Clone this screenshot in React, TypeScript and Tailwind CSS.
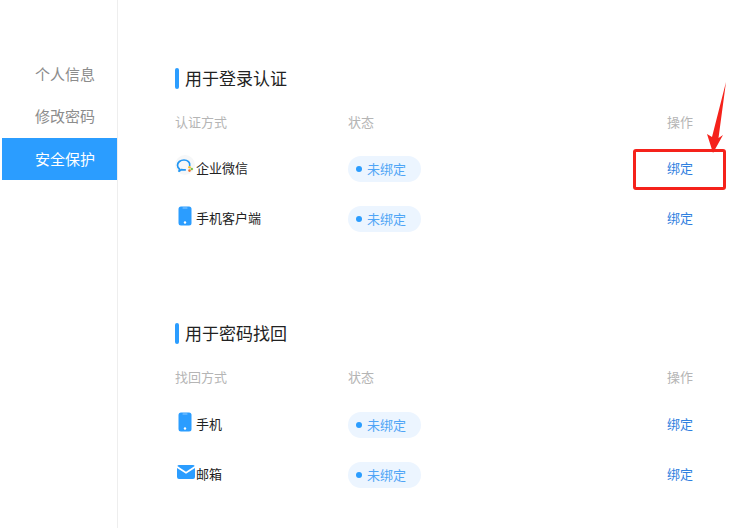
const font = { fontFamily: '"Noto Sans CJK SC", "Liberation Sans", sans-serif' };

function WeComIcon() {
  return (
    <svg width="20" height="20" viewBox="0 0 20 20" className="shrink-0 mb-[6px]">
      <circle cx="10" cy="10" r="10" fill="#f6f7f8" />
      <path d="M14.700 10.500C15.400 7.500 12.600 5 9 5 5.400 5 2.500 7.300 2.500 10.200c0 1.500.8 2.800 2 3.700l-.5 2.300 2.700-1.600c1.100.3 2.300.4 3.500.2" fill="none" stroke="#2196f3" strokeWidth="1.700" strokeLinecap="round" strokeLinejoin="round" />
      <circle cx="14.500" cy="12.300" r="1.300" fill="#f5c02c" />
      <circle cx="16.800" cy="14" r="1.200" fill="#7cc242" />
      <circle cx="14.500" cy="15.600" r="1.300" fill="#f0702e" />
    </svg>
  );
}

function PhoneIcon() {
  return (
    <svg width="14" height="20" viewBox="0 0 14 20" className="shrink-0 ml-[3px] mr-[3px] mb-[4px]">
      <rect x="0.500" y="0.500" width="13" height="19" rx="2.500" fill="#2b9dff" />
      <rect x="4.500" y="1.500" width="5" height="1" rx="0.500" fill="#8ccaff" />
      <circle cx="7" cy="16.500" r="1.200" fill="#fff" />
    </svg>
  );
}

function MailIcon() {
  return (
    <svg width="18" height="14" viewBox="0 0 18 14" className="shrink-0 ml-[2px] mb-[4px]">
      <path d="M2 0h14a2 2 0 0 1 1.700 1L9 6.700.3 1A2 2 0 0 1 2 0Z" fill="#2b9dff" />
      <path d="M0 3l9 5.800L18 3v9a2 2 0 0 1-2 2H2a2 2 0 0 1-2-2Z" fill="#2b9dff" />
    </svg>
  );
}

function Row({ icon, name }: { icon: React.ReactNode; name: string }) {
  return (
    <div className="grid grid-cols-[173px_319px_1fr] items-center h-[50px]">
      <div className="flex items-center text-[13px] text-[#222]">
        {icon}
        <span className="ml-px">{name}</span>
      </div>
      <div className="flex pt-[2px]">
        <span className="flex items-center h-[26px] w-[73px] rounded-full bg-[#ecf5ff] pl-[8px] text-[13px] leading-none text-[#4fa5f6]">
          <span className="w-[6px] h-[6px] rounded-full bg-[#2b9dff] mr-[5px]" />
          <span className="mb-[2px]">未绑定</span>
        </span>
      </div>
      <a className="text-[13px] text-[#2f80e0]">绑定</a>
    </div>
  );
}

function Section({ title, head, children, className, headClass }: { title: string; head: string; children: React.ReactNode; className: string; headClass: string }) {
  return (
    <section className={className}>
      <div className="flex items-center h-[22px]">
        <span className="w-[4px] h-[21px] rounded-sm bg-[#2b9dff] mr-[6px]" />
        <h2 className="text-[17px] text-[#222]">{title}</h2>
      </div>
      <div className={`grid grid-cols-[173px_319px_1fr] items-center h-[20px] text-[13px] text-[#b5b5b5] ${headClass}`}>
        <span>{head}</span>
        <span>状态</span>
        <span>操作</span>
      </div>
      {children}
    </section>
  );
}

export default function App() {
  return (
    <div className="relative flex w-[739px] h-[528px] overflow-hidden bg-white" style={font}>
      <aside className="w-[116px] ml-[2px] pt-[53px] border-r border-[#eeeeee] shrink-0">
        {['个人信息', '修改密码'].map((item) => (
          <div key={item} className="h-[42px] pl-[33px] flex items-center text-[15px] text-[#8c8c8c]">
            {item}
          </div>
        ))}
        <div className="h-[42px] w-[115px] mt-px pl-[33px] flex items-center text-[15px] text-white bg-[#2b9dff]">
          安全保护
        </div>
      </aside>

      <main className="flex-1 pl-[57px] pt-[67px]">
        <Section title="用于登录认证" head="认证方式" className="mb-[79px]" headClass="mt-[23px] mb-[11px]">
          <Row icon={<WeComIcon />} name="企业微信" />
          <Row icon={<PhoneIcon />} name="手机客户端" />
        </Section>
        <Section title="用于密码找回" head="找回方式" className="" headClass="mt-[23px] mb-[12px]">
          <Row icon={<PhoneIcon />} name="手机" />
          <Row icon={<MailIcon />} name="邮箱" />
        </Section>
      </main>

      {/* annotation drawn over the screenshot */}
      <div className="absolute left-[633px] top-[149px] w-[93px] h-[41px] border-[3px] border-[#f5221b] rounded-[3px]" />
      <svg className="absolute left-[700px] top-[75px]" width="32" height="85" viewBox="0 0 32 85">
        <path d="M26 7 L18.500 63 L23 60 L13 78 L7 59 L12 62 Z" fill="#f5221b" />
      </svg>
    </div>
  );
}
